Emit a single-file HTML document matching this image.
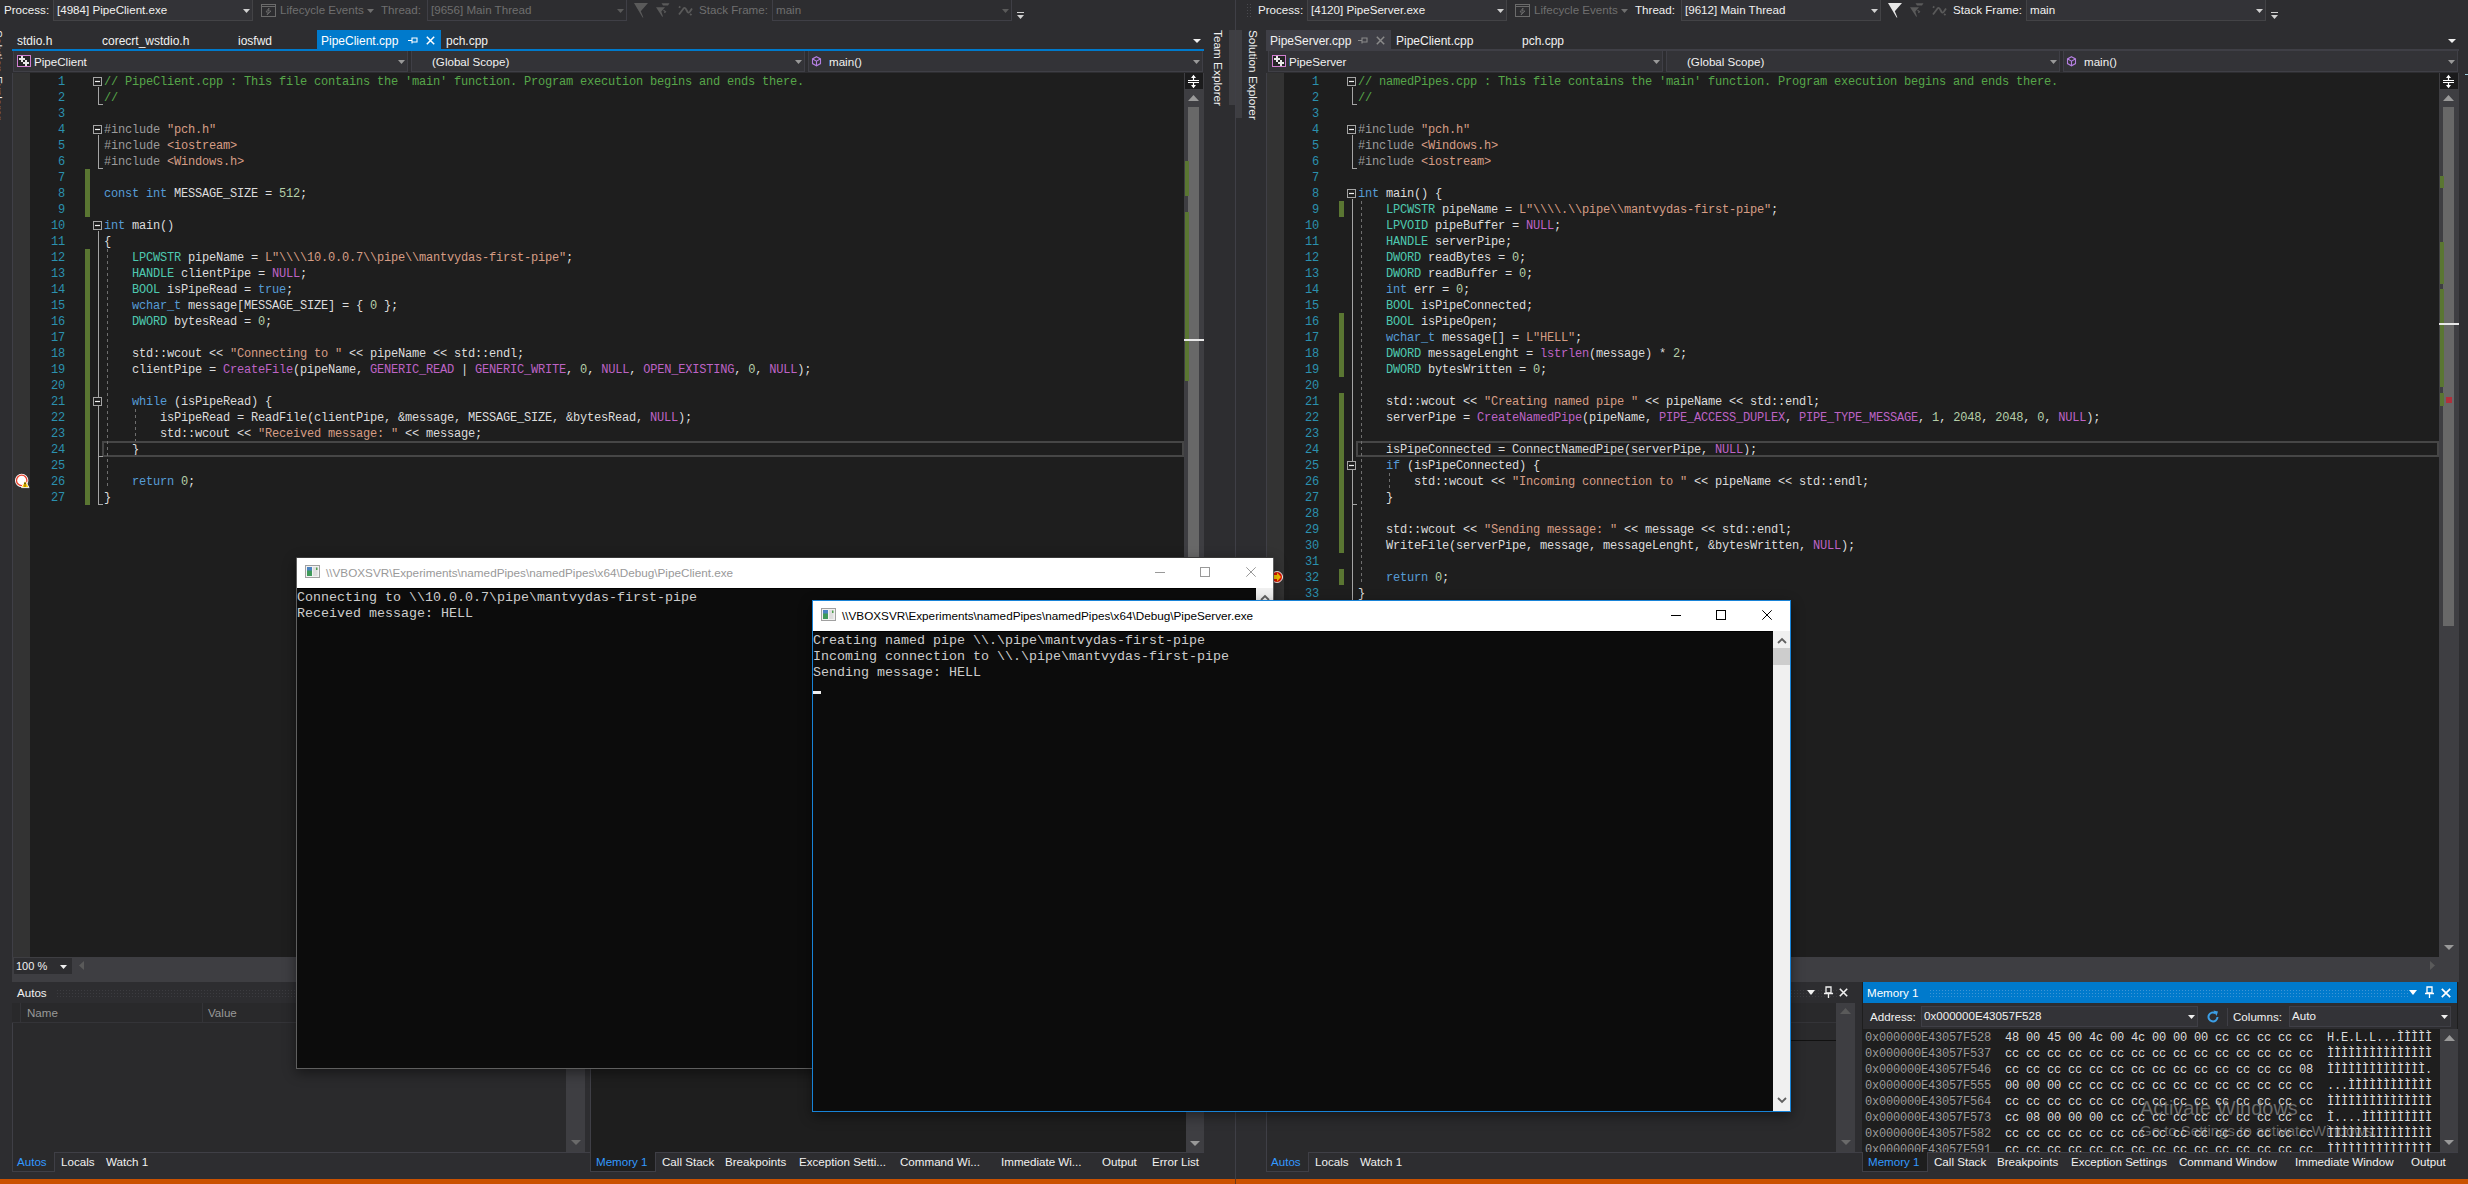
<!DOCTYPE html><html><head><meta charset="utf-8"><title>VS</title><style>
html,body{margin:0;padding:0;}
body{width:2468px;height:1184px;overflow:hidden;position:relative;background:#2d2d30;font-family:"Liberation Sans",sans-serif;}
.a{position:absolute;}
.t{white-space:pre;line-height:16px;font-family:"Liberation Sans",sans-serif;}
.code{font-family:"Liberation Mono",monospace;font-size:12px;letter-spacing:-0.2011px;line-height:16px;white-space:pre;color:#dcdcdc;}
.ln{color:#2b91af;text-align:right;}
.con{font-family:"Liberation Mono",monospace;font-size:13.333px;line-height:16px;white-space:pre;color:#cccccc;}
.vt{writing-mode:vertical-rl;font-size:11.8px;line-height:13px;}
svg{overflow:visible;}
</style></head><body><div class="a" style="left:0;top:0;width:2468px;height:1184px;background:#2d2d30"></div>
<div class="a t" style="left:4px;top:2px;color:#f1f1f1;font-size:11.6px;">Process:</div>
<div class="a" style="left:53px;top:0px;width:200px;height:21px;background:#333337;box-sizing:border-box;border:1px solid #434346;border-top:none;"></div>
<div class="a t" style="left:57px;top:2px;color:#f1f1f1;font-size:11.6px;">[4984] PipeClient.exe</div>
<svg class="a" style="left:243px;top:9px;" width="7" height="4" viewBox="0 0 7 4"><path d="M0 0H7L3.5 4Z" fill="#d0d0d0"/></svg>
<svg class="a" style="left:261px;top:4px;" width="15" height="13" viewBox="0 0 15 13"><rect x="0.5" y="0.5" width="14" height="12" fill="none" stroke="#6b6b6b"/><path d="M0.5 2.5H14.5" stroke="#6b6b6b"/><path d="M8 4L5 8H7.5L6 11L10 7H7.5Z" fill="none" stroke="#6b6b6b" stroke-width="0.9"/></svg>
<div class="a t" style="left:280px;top:2px;color:#6f6f6f;font-size:11.6px;">Lifecycle Events</div>
<svg class="a" style="left:367px;top:9px;" width="7" height="4" viewBox="0 0 7 4"><path d="M0 0H7L3.5 4Z" fill="#6f6f6f"/></svg>
<div class="a t" style="left:381px;top:2px;color:#6f6f6f;font-size:11.6px;">Thread:</div>
<div class="a" style="left:427px;top:0px;width:200px;height:21px;background:#2d2d30;box-sizing:border-box;border:1px solid #3f3f46;border-top:none;"></div>
<div class="a t" style="left:431px;top:2px;color:#6f6f6f;font-size:11.6px;">[9656] Main Thread</div>
<svg class="a" style="left:617px;top:9px;" width="7" height="4" viewBox="0 0 7 4"><path d="M0 0H7L3.5 4Z" fill="#5a5a5a"/></svg>
<svg class="a" style="left:634px;top:3px;" width="15" height="15" viewBox="0 0 15 15"><path d="M0 0H14L6.8 8.2L9.4 14.4L8.6 14.4Z" fill="#5a5a5a"/></svg>
<svg class="a" style="left:656px;top:3px;" width="15" height="15" viewBox="0 0 15 15"><path d="M5.5 0.2H13.5L12 2.4H7Z" fill="#5a5a5a"/><path d="M0 4.2H9L5.3 8.4L7 13.5L6.2 13.8Z" fill="#5a5a5a"/><path d="M7.5 7.2L9.5 8.7L8.3 9.8" fill="none" stroke="#5a5a5a" stroke-width="1.2"/></svg>
<svg class="a" style="left:678px;top:3px;" width="15" height="14" viewBox="0 0 15 14"><path d="M1 11.5L5.5 5.5Q7 4 8.2 6.5L9.5 9Q10.5 10.5 12 8.5L14 5.5M1 3.5L2.3 4.7M12.2 12.2L13.4 10.8" fill="none" stroke="#5a5a5a" stroke-width="1.8"/></svg>
<div class="a t" style="left:699px;top:2px;color:#6f6f6f;font-size:11.6px;">Stack Frame:</div>
<div class="a" style="left:772px;top:0px;width:240px;height:21px;background:#2d2d30;box-sizing:border-box;border:1px solid #3f3f46;border-top:none;"></div>
<div class="a t" style="left:776px;top:2px;color:#6f6f6f;font-size:11.6px;">main</div>
<svg class="a" style="left:1002px;top:9px;" width="7" height="4" viewBox="0 0 7 4"><path d="M0 0H7L3.5 4Z" fill="#5a5a5a"/></svg>
<svg class="a" style="left:1017px;top:12px;" width="8" height="8" viewBox="0 0 8 8"><path d="M0 0.5H7" stroke="#d0d0d0"/><path d="M0 3H7L3.5 7Z" fill="#d0d0d0"/></svg>
<div class="a t" style="left:17px;top:33px;color:#f1f1f1;font-size:12px;">stdio.h</div>
<div class="a t" style="left:102px;top:33px;color:#f1f1f1;font-size:12px;">corecrt_wstdio.h</div>
<div class="a t" style="left:238px;top:33px;color:#f1f1f1;font-size:12px;">iosfwd</div>
<div class="a" style="left:317px;top:30px;width:124px;height:20px;background:#007acc;"></div>
<div class="a t" style="left:321px;top:33px;color:#ffffff;font-size:12px;">PipeClient.cpp</div>
<svg class="a" style="left:408px;top:36px;" width="10" height="9" viewBox="0 0 10 9"><path d="M0 4.5H4M4 1.5V7.5M4 2H9V6H4" fill="none" stroke="#ffffff" stroke-width="1.1"/></svg>
<svg class="a" style="left:426px;top:36px;" width="9" height="9" viewBox="0 0 9 9"><path d="M0.8 0.8L8.2 8.2M8.2 0.8L0.8 8.2" stroke="#ffffff" stroke-width="1.5"/></svg>
<div class="a t" style="left:446px;top:33px;color:#f1f1f1;font-size:12px;">pch.cpp</div>
<div class="a" style="left:12px;top:49px;width:1192px;height:2px;background:#007acc;"></div>
<svg class="a" style="left:1193px;top:39px;" width="8" height="4" viewBox="0 0 8 4"><path d="M0 0H8L4.0 4Z" fill="#f0f0f0"/></svg>
<div class="a" style="left:12px;top:51px;width:1192px;height:22px;background:#2d2d30;"></div>
<div class="a" style="left:13px;top:51px;width:395px;height:21px;background:#333337;box-sizing:border-box;border:1px solid #3f3f46;border-top:none;"></div>
<svg class="a" style="left:398px;top:60px;" width="7" height="4" viewBox="0 0 7 4"><path d="M0 0H7L3.5 4Z" fill="#999999"/></svg>
<svg class="a" style="left:17px;top:55px;" width="15" height="13" viewBox="0 0 15 13"><rect x="0.5" y="0.5" width="13" height="11" fill="#252526" stroke="#d17fd1"/><path d="M2 3h6v2h-6zM4 1h2v6h-2zM6 7h6v2h-6zM8 5h2v6h-2z" fill="#e8e8e8"/></svg>
<div class="a t" style="left:34px;top:54px;color:#f1f1f1;font-size:11.6px;">PipeClient</div>
<div class="a" style="left:411px;top:51px;width:394px;height:21px;background:#333337;box-sizing:border-box;border:1px solid #3f3f46;border-top:none;"></div>
<svg class="a" style="left:795px;top:60px;" width="7" height="4" viewBox="0 0 7 4"><path d="M0 0H7L3.5 4Z" fill="#999999"/></svg>
<div class="a t" style="left:432px;top:54px;color:#f1f1f1;font-size:11.6px;">(Global Scope)</div>
<div class="a" style="left:808px;top:51px;width:395px;height:21px;background:#333337;box-sizing:border-box;border:1px solid #3f3f46;border-top:none;"></div>
<svg class="a" style="left:1193px;top:60px;" width="7" height="4" viewBox="0 0 7 4"><path d="M0 0H7L3.5 4Z" fill="#999999"/></svg>
<svg class="a" style="left:812px;top:56px;" width="10" height="11" viewBox="0 0 10 11"><path d="M4.5 0.7L8.5 2.9V7.6L4.5 9.8L0.5 7.6V2.9Z M0.8 3.1L4.5 5.2L8.2 3.1 M4.5 5.2V9.6" fill="none" stroke="#b47fe0" stroke-width="1.1"/></svg>
<div class="a t" style="left:829px;top:54px;color:#f1f1f1;font-size:11.6px;">main()</div>
<div class="a" style="left:12px;top:73px;width:1192px;height:884px;background:#1e1e1e;"></div>
<div class="a" style="left:12px;top:73px;width:1px;height:884px;background:#3f3f46;"></div>
<div class="a" style="left:13px;top:73px;width:17px;height:884px;background:#333333;"></div>
<div class="a" style="left:1184px;top:73px;width:20px;height:884px;background:#3e3e42;"></div>
<div class="a" style="left:1185px;top:73px;width:18px;height:16px;background:#1b1b1c;"></div>
<svg class="a" style="left:1184px;top:73px;" width="20" height="16" viewBox="0 0 20 16"><rect x="4" y="7" width="11" height="1" fill="#ffffff"/><rect x="4" y="9" width="11" height="1" fill="#ffffff"/><path d="M9.5 3V7M9.5 10V14" stroke="#ffffff" stroke-width="1.2"/><path d="M7 5L9.5 1.8L12 5Z M7 12L9.5 15.2L12 12Z" fill="#ffffff"/></svg>
<svg class="a" style="left:1188px;top:95px;" width="11" height="7" viewBox="0 0 11 7"><path d="M0 6H11L5.5 0Z" fill="#999999"/></svg>
<svg class="a" style="left:1189px;top:945px;" width="10" height="5" viewBox="0 0 10 5"><path d="M0 0H10L5.0 5Z" fill="#999999"/></svg>
<div class="a" style="left:1188px;top:107px;width:11px;height:843px;background:#686868;"></div>
<div class="a" style="left:85px;top:169px;width:5px;height:48px;background:#5a7632;"></div>
<div class="a" style="left:85px;top:249px;width:5px;height:256px;background:#5a7632;"></div>
<div class="a" style="left:1185px;top:161px;width:4px;height:35px;background:#5a7632;"></div>
<div class="a" style="left:1185px;top:212px;width:4px;height:169px;background:#5a7632;"></div>
<div class="a" style="left:1184px;top:339px;width:20px;height:2px;background:#e8e8e8;"></div>
<div class="a code ln" style="left:30px;top:74px;width:35px;">1<br>2<br>3<br>4<br>5<br>6<br>7<br>8<br>9<br>10<br>11<br>12<br>13<br>14<br>15<br>16<br>17<br>18<br>19<br>20<br>21<br>22<br>23<br>24<br>25<br>26<br>27</div>
<div class="a code" style="left:104px;top:74px;"><span style="color:#57a64a">// PipeClient.cpp : This file contains the &#x27;main&#x27; function. Program execution begins and ends there.</span><br><span style="color:#57a64a">//</span><br><br><span style="color:#9b9b9b">#include</span><span style="color:#d69d85"> &quot;pch.h&quot;</span><br><span style="color:#9b9b9b">#include</span><span style="color:#d69d85"> &lt;iostream&gt;</span><br><span style="color:#9b9b9b">#include</span><span style="color:#d69d85"> &lt;Windows.h&gt;</span><br><br><span style="color:#569cd6">const</span> <span style="color:#569cd6">int</span> MESSAGE_SIZE = <span style="color:#b5cea8">512</span>;<br><br><span style="color:#569cd6">int</span> main()<br>{<br>    <span style="color:#4ec9b0">LPCWSTR</span> pipeName = <span style="color:#d69d85">L&quot;\\\\10.0.0.7\\pipe\\mantvydas-first-pipe&quot;</span>;<br>    <span style="color:#4ec9b0">HANDLE</span> clientPipe = <span style="color:#bd63c5">NULL</span>;<br>    <span style="color:#4ec9b0">BOOL</span> isPipeRead = <span style="color:#569cd6">true</span>;<br>    <span style="color:#569cd6">wchar_t</span> message[MESSAGE_SIZE] = { <span style="color:#b5cea8">0</span> };<br>    <span style="color:#4ec9b0">DWORD</span> bytesRead = <span style="color:#b5cea8">0</span>;<br><br>    std::wcout &lt;&lt; <span style="color:#d69d85">&quot;Connecting to &quot;</span> &lt;&lt; pipeName &lt;&lt; std::endl;<br>    clientPipe = <span style="color:#bd63c5">CreateFile</span>(pipeName, <span style="color:#bd63c5">GENERIC_READ</span> | <span style="color:#bd63c5">GENERIC_WRITE</span>, <span style="color:#b5cea8">0</span>, <span style="color:#bd63c5">NULL</span>, <span style="color:#bd63c5">OPEN_EXISTING</span>, <span style="color:#b5cea8">0</span>, <span style="color:#bd63c5">NULL</span>);<br><br>    <span style="color:#569cd6">while</span> (isPipeRead) {<br>        isPipeRead = ReadFile(clientPipe, &amp;message, MESSAGE_SIZE, &amp;bytesRead, <span style="color:#bd63c5">NULL</span>);<br>        std::wcout &lt;&lt; <span style="color:#d69d85">&quot;Received message: &quot;</span> &lt;&lt; message;<br>    }<br><br>    <span style="color:#569cd6">return</span> <span style="color:#b5cea8">0</span>;<br>}</div>
<div class="a" style="left:102px;top:441px;width:1082px;height:16px;box-sizing:border-box;border:2px solid #464646;"></div>
<svg class="a" style="left:93px;top:77px;" width="10" height="10" viewBox="0 0 10 10"><rect x="0.5" y="0.5" width="8" height="8" fill="#1e1e1e" stroke="#a5a5a5"/><path d="M2 4.5H7" stroke="#f0f0f0" stroke-width="1.2"/></svg>
<div class="a" style="left:98px;top:87px;width:1px;height:18px;background:#a5a5a5;"></div>
<div class="a" style="left:98px;top:104px;width:5px;height:1px;background:#a5a5a5;"></div>
<svg class="a" style="left:93px;top:125px;" width="10" height="10" viewBox="0 0 10 10"><rect x="0.5" y="0.5" width="8" height="8" fill="#1e1e1e" stroke="#a5a5a5"/><path d="M2 4.5H7" stroke="#f0f0f0" stroke-width="1.2"/></svg>
<div class="a" style="left:98px;top:135px;width:1px;height:34px;background:#a5a5a5;"></div>
<div class="a" style="left:98px;top:168px;width:5px;height:1px;background:#a5a5a5;"></div>
<svg class="a" style="left:93px;top:221px;" width="10" height="10" viewBox="0 0 10 10"><rect x="0.5" y="0.5" width="8" height="8" fill="#1e1e1e" stroke="#a5a5a5"/><path d="M2 4.5H7" stroke="#f0f0f0" stroke-width="1.2"/></svg>
<div class="a" style="left:98px;top:231px;width:1px;height:274px;background:#a5a5a5;"></div>
<div class="a" style="left:98px;top:504px;width:5px;height:1px;background:#a5a5a5;"></div>
<svg class="a" style="left:93px;top:397px;" width="10" height="10" viewBox="0 0 10 10"><rect x="0.5" y="0.5" width="8" height="8" fill="#1e1e1e" stroke="#a5a5a5"/><path d="M2 4.5H7" stroke="#f0f0f0" stroke-width="1.2"/></svg>
<div class="a" style="left:107px;top:249px;width:1px;height:240px;background-image:linear-gradient(#6e6e6e 50%, transparent 50%);background-size:1px 6px;"></div>
<div class="a" style="left:135px;top:409px;width:1px;height:32px;background-image:linear-gradient(#6e6e6e 50%, transparent 50%);background-size:1px 6px;"></div>
<div class="a" style="left:98px;top:456px;width:5px;height:1px;background:#a5a5a5;"></div>
<svg class="a" style="left:14px;top:472px;" width="17" height="17" viewBox="0 0 17 17"><circle cx="7.7" cy="8.4" r="5.9" fill="#ffffff" stroke="#ffffff" stroke-width="1.6"/><circle cx="7.7" cy="8.4" r="5.2" fill="#ffffff" stroke="#e8412c" stroke-width="1.3"/><path d="M7.5 15.6L11 8.2L15 15.6Z" fill="#ffcc00" stroke="#ffffff" stroke-width="0.9"/><path d="M11 10.5V12.6M11 13.6V14.6" stroke="#000" stroke-width="1.1"/></svg>
<div class="a" style="left:12px;top:957px;width:1192px;height:25px;background:#3e3e42;"></div>
<div class="a" style="left:14px;top:958px;width:58px;height:16px;background:#2d2d30;"></div>
<div class="a t" style="left:16px;top:958px;color:#f1f1f1;font-size:11px;">100 %</div>
<svg class="a" style="left:60px;top:965px;" width="7" height="4" viewBox="0 0 7 4"><path d="M0 0H7L3.5 4Z" fill="#f0f0f0"/></svg>
<svg class="a" style="left:79px;top:961px;" width="5" height="9" viewBox="0 0 5 9"><path d="M5 0V9L0 4.5Z" fill="#5a5a5a"/></svg>
<div class="a" style="left:12px;top:982px;width:573px;height:170px;background:#2a2a2c;box-sizing:border-box;border-left:1px solid #3f3f46;"></div>
<div class="a" style="left:12px;top:982px;width:573px;height:21px;background:#2d2d30;"></div>
<div class="a t" style="left:17px;top:985px;color:#f1f1f1;font-size:11.6px;">Autos</div>
<div class="a" style="left:56px;top:989px;width:513px;height:8px;background-image:radial-gradient(#3c3c40 0.6px, transparent 0.7px);background-size:3px 3px;"></div>
<div class="a" style="left:12px;top:1003px;width:555px;height:20px;background:#29292b;"></div>
<div class="a" style="left:20px;top:1003px;width:1px;height:19px;background:#343438;"></div>
<div class="a" style="left:202px;top:1003px;width:1px;height:19px;background:#343438;"></div>
<div class="a" style="left:12px;top:1022px;width:555px;height:1px;background:#343438;"></div>
<div class="a t" style="left:27px;top:1005px;color:#999999;font-size:11.6px;">Name</div>
<div class="a t" style="left:208px;top:1005px;color:#999999;font-size:11.6px;">Value</div>
<div class="a" style="left:566px;top:1003px;width:19px;height:149px;background:#3e3e42;"></div>
<svg class="a" style="left:570px;top:1008px;" width="11" height="6" viewBox="0 0 11 6"><path d="M0 6H11L5.5 0Z" fill="#5a5a5a"/></svg>
<svg class="a" style="left:571px;top:1140px;" width="10" height="5" viewBox="0 0 10 5"><path d="M0 0H10L5.0 5Z" fill="#6a6a6a"/></svg>
<div class="a" style="left:590px;top:982px;width:614px;height:170px;background:#1e1e1e;box-sizing:border-box;border-left:1px solid #3f3f46;"></div>
<div class="a" style="left:1186px;top:1029px;width:18px;height:123px;background:#3e3e42;"></div>
<svg class="a" style="left:1190px;top:1141px;" width="10" height="5" viewBox="0 0 10 5"><path d="M0 0H10L5.0 5Z" fill="#999999"/></svg>
<div class="a" style="left:12px;top:1152px;width:1192px;height:21px;background:#2d2d30;"></div>
<div class="a" style="left:12px;top:1152px;width:1192px;height:1px;background:#3f3f46;"></div>
<div class="a" style="left:12px;top:1152px;width:43px;height:20px;background:#2a2a2c;box-sizing:border-box;border:1px solid #3f3f46;border-top:none;"></div>
<div class="a t" style="left:17px;top:1154px;color:#3399ff;font-size:11.6px;">Autos</div>
<div class="a t" style="left:61px;top:1154px;color:#f1f1f1;font-size:11.6px;">Locals</div>
<div class="a t" style="left:106px;top:1154px;color:#f1f1f1;font-size:11.6px;">Watch 1</div>
<div class="a" style="left:590px;top:1152px;width:66px;height:20px;background:#1e1e1e;box-sizing:border-box;border:1px solid #3f3f46;border-top:none;"></div>
<div class="a t" style="left:596px;top:1154px;color:#3399ff;font-size:11.6px;">Memory 1</div>
<div class="a t" style="left:662px;top:1154px;color:#f1f1f1;font-size:11.6px;">Call Stack</div>
<div class="a t" style="left:725px;top:1154px;color:#f1f1f1;font-size:11.6px;">Breakpoints</div>
<div class="a t" style="left:799px;top:1154px;color:#f1f1f1;font-size:11.6px;">Exception Setti...</div>
<div class="a t" style="left:900px;top:1154px;color:#f1f1f1;font-size:11.6px;">Command Wi...</div>
<div class="a t" style="left:1001px;top:1154px;color:#f1f1f1;font-size:11.6px;">Immediate Wi...</div>
<div class="a t" style="left:1102px;top:1154px;color:#f1f1f1;font-size:11.6px;">Output</div>
<div class="a t" style="left:1152px;top:1154px;color:#f1f1f1;font-size:11.6px;">Error List</div>
<div class="a t" style="left:1258px;top:2px;color:#f1f1f1;font-size:11.6px;">Process:</div>
<div class="a" style="left:1307px;top:0px;width:200px;height:21px;background:#333337;box-sizing:border-box;border:1px solid #434346;border-top:none;"></div>
<div class="a t" style="left:1311px;top:2px;color:#f1f1f1;font-size:11.6px;">[4120] PipeServer.exe</div>
<svg class="a" style="left:1497px;top:9px;" width="7" height="4" viewBox="0 0 7 4"><path d="M0 0H7L3.5 4Z" fill="#d0d0d0"/></svg>
<svg class="a" style="left:1515px;top:4px;" width="15" height="13" viewBox="0 0 15 13"><rect x="0.5" y="0.5" width="14" height="12" fill="none" stroke="#6b6b6b"/><path d="M0.5 2.5H14.5" stroke="#6b6b6b"/><path d="M8 4L5 8H7.5L6 11L10 7H7.5Z" fill="none" stroke="#6b6b6b" stroke-width="0.9"/></svg>
<div class="a t" style="left:1534px;top:2px;color:#6f6f6f;font-size:11.6px;">Lifecycle Events</div>
<svg class="a" style="left:1621px;top:9px;" width="7" height="4" viewBox="0 0 7 4"><path d="M0 0H7L3.5 4Z" fill="#6f6f6f"/></svg>
<div class="a t" style="left:1635px;top:2px;color:#f1f1f1;font-size:11.6px;">Thread:</div>
<div class="a" style="left:1681px;top:0px;width:200px;height:21px;background:#333337;box-sizing:border-box;border:1px solid #434346;border-top:none;"></div>
<div class="a t" style="left:1685px;top:2px;color:#f1f1f1;font-size:11.6px;">[9612] Main Thread</div>
<svg class="a" style="left:1871px;top:9px;" width="7" height="4" viewBox="0 0 7 4"><path d="M0 0H7L3.5 4Z" fill="#d0d0d0"/></svg>
<svg class="a" style="left:1888px;top:3px;" width="15" height="15" viewBox="0 0 15 15"><path d="M0 0H14L6.8 8.2L9.4 14.4L8.6 14.4Z" fill="#e8e8e8"/></svg>
<svg class="a" style="left:1910px;top:3px;" width="15" height="15" viewBox="0 0 15 15"><path d="M5.5 0.2H13.5L12 2.4H7Z" fill="#5a5a5a"/><path d="M0 4.2H9L5.3 8.4L7 13.5L6.2 13.8Z" fill="#5a5a5a"/><path d="M7.5 7.2L9.5 8.7L8.3 9.8" fill="none" stroke="#5a5a5a" stroke-width="1.2"/></svg>
<svg class="a" style="left:1932px;top:3px;" width="15" height="14" viewBox="0 0 15 14"><path d="M1 11.5L5.5 5.5Q7 4 8.2 6.5L9.5 9Q10.5 10.5 12 8.5L14 5.5M1 3.5L2.3 4.7M12.2 12.2L13.4 10.8" fill="none" stroke="#5a5a5a" stroke-width="1.8"/></svg>
<div class="a t" style="left:1953px;top:2px;color:#f1f1f1;font-size:11.6px;">Stack Frame:</div>
<div class="a" style="left:2026px;top:0px;width:240px;height:21px;background:#333337;box-sizing:border-box;border:1px solid #434346;border-top:none;"></div>
<div class="a t" style="left:2030px;top:2px;color:#f1f1f1;font-size:11.6px;">main</div>
<svg class="a" style="left:2256px;top:9px;" width="7" height="4" viewBox="0 0 7 4"><path d="M0 0H7L3.5 4Z" fill="#d0d0d0"/></svg>
<svg class="a" style="left:2271px;top:12px;" width="8" height="8" viewBox="0 0 8 8"><path d="M0 0.5H7" stroke="#d0d0d0"/><path d="M0 3H7L3.5 7Z" fill="#d0d0d0"/></svg>
<div class="a" style="left:1266px;top:30px;width:125px;height:20px;background:#3f3f46;"></div>
<div class="a t" style="left:1270px;top:33px;color:#f1f1f1;font-size:12px;">PipeServer.cpp</div>
<svg class="a" style="left:1358px;top:36px;" width="10" height="9" viewBox="0 0 10 9"><path d="M0 4.5H4M4 1.5V7.5M4 2H9V6H4" fill="none" stroke="#8a8a8a" stroke-width="1.1"/></svg>
<svg class="a" style="left:1376px;top:36px;" width="9" height="9" viewBox="0 0 9 9"><path d="M0.8 0.8L8.2 8.2M8.2 0.8L0.8 8.2" stroke="#8a8a8a" stroke-width="1.5"/></svg>
<div class="a t" style="left:1396px;top:33px;color:#f1f1f1;font-size:12px;">PipeClient.cpp</div>
<div class="a t" style="left:1522px;top:33px;color:#f1f1f1;font-size:12px;">pch.cpp</div>
<div class="a" style="left:1266px;top:49px;width:1193px;height:3px;background:#3f3f46;"></div>
<svg class="a" style="left:2448px;top:39px;" width="8" height="4" viewBox="0 0 8 4"><path d="M0 0H8L4.0 4Z" fill="#f0f0f0"/></svg>
<div class="a" style="left:1266px;top:51px;width:1193px;height:22px;background:#2d2d30;"></div>
<div class="a" style="left:1268px;top:51px;width:395px;height:21px;background:#333337;box-sizing:border-box;border:1px solid #3f3f46;border-top:none;"></div>
<svg class="a" style="left:1653px;top:60px;" width="7" height="4" viewBox="0 0 7 4"><path d="M0 0H7L3.5 4Z" fill="#999999"/></svg>
<svg class="a" style="left:1272px;top:55px;" width="15" height="13" viewBox="0 0 15 13"><rect x="0.5" y="0.5" width="13" height="11" fill="#252526" stroke="#d17fd1"/><path d="M2 3h6v2h-6zM4 1h2v6h-2zM6 7h6v2h-6zM8 5h2v6h-2z" fill="#e8e8e8"/></svg>
<div class="a t" style="left:1289px;top:54px;color:#f1f1f1;font-size:11.6px;">PipeServer</div>
<div class="a" style="left:1666px;top:51px;width:394px;height:21px;background:#333337;box-sizing:border-box;border:1px solid #3f3f46;border-top:none;"></div>
<svg class="a" style="left:2050px;top:60px;" width="7" height="4" viewBox="0 0 7 4"><path d="M0 0H7L3.5 4Z" fill="#999999"/></svg>
<div class="a t" style="left:1687px;top:54px;color:#f1f1f1;font-size:11.6px;">(Global Scope)</div>
<div class="a" style="left:2063px;top:51px;width:395px;height:21px;background:#333337;box-sizing:border-box;border:1px solid #3f3f46;border-top:none;"></div>
<svg class="a" style="left:2448px;top:60px;" width="7" height="4" viewBox="0 0 7 4"><path d="M0 0H7L3.5 4Z" fill="#999999"/></svg>
<svg class="a" style="left:2067px;top:56px;" width="10" height="11" viewBox="0 0 10 11"><path d="M4.5 0.7L8.5 2.9V7.6L4.5 9.8L0.5 7.6V2.9Z M0.8 3.1L4.5 5.2L8.2 3.1 M4.5 5.2V9.6" fill="none" stroke="#b47fe0" stroke-width="1.1"/></svg>
<div class="a t" style="left:2084px;top:54px;color:#f1f1f1;font-size:11.6px;">main()</div>
<div class="a" style="left:1266px;top:73px;width:1193px;height:884px;background:#1e1e1e;"></div>
<div class="a" style="left:1266px;top:73px;width:1px;height:884px;background:#3f3f46;"></div>
<div class="a" style="left:1267px;top:73px;width:17px;height:884px;background:#333333;"></div>
<div class="a" style="left:2439px;top:73px;width:20px;height:884px;background:#3e3e42;"></div>
<div class="a" style="left:2440px;top:73px;width:18px;height:16px;background:#1b1b1c;"></div>
<svg class="a" style="left:2439px;top:73px;" width="20" height="16" viewBox="0 0 20 16"><rect x="4" y="7" width="11" height="1" fill="#ffffff"/><rect x="4" y="9" width="11" height="1" fill="#ffffff"/><path d="M9.5 3V7M9.5 10V14" stroke="#ffffff" stroke-width="1.2"/><path d="M7 5L9.5 1.8L12 5Z M7 12L9.5 15.2L12 12Z" fill="#ffffff"/></svg>
<svg class="a" style="left:2443px;top:95px;" width="11" height="7" viewBox="0 0 11 7"><path d="M0 6H11L5.5 0Z" fill="#999999"/></svg>
<svg class="a" style="left:2444px;top:945px;" width="10" height="5" viewBox="0 0 10 5"><path d="M0 0H10L5.0 5Z" fill="#999999"/></svg>
<div class="a" style="left:2443px;top:107px;width:11px;height:519px;background:#686868;"></div>
<div class="a" style="left:1339px;top:201px;width:5px;height:16px;background:#5a7632;"></div>
<div class="a" style="left:1339px;top:313px;width:5px;height:64px;background:#5a7632;"></div>
<div class="a" style="left:1339px;top:393px;width:5px;height:160px;background:#5a7632;"></div>
<div class="a" style="left:1339px;top:569px;width:5px;height:16px;background:#5a7632;"></div>
<div class="a" style="left:2440px;top:176px;width:4px;height:12px;background:#5a7632;"></div>
<div class="a" style="left:2440px;top:242px;width:4px;height:42px;background:#5a7632;"></div>
<div class="a" style="left:2440px;top:289px;width:4px;height:98px;background:#5a7632;"></div>
<div class="a" style="left:2440px;top:393px;width:4px;height:13px;background:#5a7632;"></div>
<div class="a" style="left:2439px;top:323px;width:20px;height:2px;background:#e8e8e8;"></div>
<div class="a" style="left:2446px;top:397px;width:6px;height:6px;background:#b0303c;"></div>
<div class="a code ln" style="left:1284px;top:74px;width:35px;">1<br>2<br>3<br>4<br>5<br>6<br>7<br>8<br>9<br>10<br>11<br>12<br>13<br>14<br>15<br>16<br>17<br>18<br>19<br>20<br>21<br>22<br>23<br>24<br>25<br>26<br>27<br>28<br>29<br>30<br>31<br>32<br>33</div>
<div class="a code" style="left:1358px;top:74px;"><span style="color:#57a64a">// namedPipes.cpp : This file contains the &#x27;main&#x27; function. Program execution begins and ends there.</span><br><span style="color:#57a64a">//</span><br><br><span style="color:#9b9b9b">#include</span><span style="color:#d69d85"> &quot;pch.h&quot;</span><br><span style="color:#9b9b9b">#include</span><span style="color:#d69d85"> &lt;Windows.h&gt;</span><br><span style="color:#9b9b9b">#include</span><span style="color:#d69d85"> &lt;iostream&gt;</span><br><br><span style="color:#569cd6">int</span> main() {<br>    <span style="color:#4ec9b0">LPCWSTR</span> pipeName = <span style="color:#d69d85">L&quot;\\\\.\\pipe\\mantvydas-first-pipe&quot;</span>;<br>    <span style="color:#4ec9b0">LPVOID</span> pipeBuffer = <span style="color:#bd63c5">NULL</span>;<br>    <span style="color:#4ec9b0">HANDLE</span> serverPipe;<br>    <span style="color:#4ec9b0">DWORD</span> readBytes = <span style="color:#b5cea8">0</span>;<br>    <span style="color:#4ec9b0">DWORD</span> readBuffer = <span style="color:#b5cea8">0</span>;<br>    <span style="color:#569cd6">int</span> err = <span style="color:#b5cea8">0</span>;<br>    <span style="color:#4ec9b0">BOOL</span> isPipeConnected;<br>    <span style="color:#4ec9b0">BOOL</span> isPipeOpen;<br>    <span style="color:#569cd6">wchar_t</span> message[] = <span style="color:#d69d85">L&quot;HELL&quot;</span>;<br>    <span style="color:#4ec9b0">DWORD</span> messageLenght = <span style="color:#bd63c5">lstrlen</span>(message) * <span style="color:#b5cea8">2</span>;<br>    <span style="color:#4ec9b0">DWORD</span> bytesWritten = <span style="color:#b5cea8">0</span>;<br><br>    std::wcout &lt;&lt; <span style="color:#d69d85">&quot;Creating named pipe &quot;</span> &lt;&lt; pipeName &lt;&lt; std::endl;<br>    serverPipe = <span style="color:#bd63c5">CreateNamedPipe</span>(pipeName, <span style="color:#bd63c5">PIPE_ACCESS_DUPLEX</span>, <span style="color:#bd63c5">PIPE_TYPE_MESSAGE</span>, <span style="color:#b5cea8">1</span>, <span style="color:#b5cea8">2048</span>, <span style="color:#b5cea8">2048</span>, <span style="color:#b5cea8">0</span>, <span style="color:#bd63c5">NULL</span>);<br><br>    isPipeConnected = ConnectNamedPipe(serverPipe, <span style="color:#bd63c5">NULL</span>);<br>    <span style="color:#569cd6">if</span> (isPipeConnected) {<br>        std::wcout &lt;&lt; <span style="color:#d69d85">&quot;Incoming connection to &quot;</span> &lt;&lt; pipeName &lt;&lt; std::endl;<br>    }<br><br>    std::wcout &lt;&lt; <span style="color:#d69d85">&quot;Sending message: &quot;</span> &lt;&lt; message &lt;&lt; std::endl;<br>    WriteFile(serverPipe, message, messageLenght, &amp;bytesWritten, <span style="color:#bd63c5">NULL</span>);<br><br>    <span style="color:#569cd6">return</span> <span style="color:#b5cea8">0</span>;<br>}</div>
<div class="a" style="left:1356px;top:441px;width:1083px;height:16px;box-sizing:border-box;border:2px solid #464646;"></div>
<svg class="a" style="left:1347px;top:77px;" width="10" height="10" viewBox="0 0 10 10"><rect x="0.5" y="0.5" width="8" height="8" fill="#1e1e1e" stroke="#a5a5a5"/><path d="M2 4.5H7" stroke="#f0f0f0" stroke-width="1.2"/></svg>
<div class="a" style="left:1352px;top:87px;width:1px;height:18px;background:#a5a5a5;"></div>
<div class="a" style="left:1352px;top:104px;width:5px;height:1px;background:#a5a5a5;"></div>
<svg class="a" style="left:1347px;top:125px;" width="10" height="10" viewBox="0 0 10 10"><rect x="0.5" y="0.5" width="8" height="8" fill="#1e1e1e" stroke="#a5a5a5"/><path d="M2 4.5H7" stroke="#f0f0f0" stroke-width="1.2"/></svg>
<div class="a" style="left:1352px;top:135px;width:1px;height:34px;background:#a5a5a5;"></div>
<div class="a" style="left:1352px;top:168px;width:5px;height:1px;background:#a5a5a5;"></div>
<svg class="a" style="left:1347px;top:189px;" width="10" height="10" viewBox="0 0 10 10"><rect x="0.5" y="0.5" width="8" height="8" fill="#1e1e1e" stroke="#a5a5a5"/><path d="M2 4.5H7" stroke="#f0f0f0" stroke-width="1.2"/></svg>
<div class="a" style="left:1352px;top:199px;width:1px;height:402px;background:#a5a5a5;"></div>
<div class="a" style="left:1352px;top:600px;width:5px;height:1px;background:#a5a5a5;"></div>
<svg class="a" style="left:1347px;top:461px;" width="10" height="10" viewBox="0 0 10 10"><rect x="0.5" y="0.5" width="8" height="8" fill="#1e1e1e" stroke="#a5a5a5"/><path d="M2 4.5H7" stroke="#f0f0f0" stroke-width="1.2"/></svg>
<div class="a" style="left:1361px;top:201px;width:1px;height:384px;background-image:linear-gradient(#6e6e6e 50%, transparent 50%);background-size:1px 6px;"></div>
<div class="a" style="left:1389px;top:473px;width:1px;height:16px;background-image:linear-gradient(#6e6e6e 50%, transparent 50%);background-size:1px 6px;"></div>
<div class="a" style="left:1352px;top:504px;width:5px;height:1px;background:#a5a5a5;"></div>
<svg class="a" style="left:1270px;top:570px;" width="14" height="14" viewBox="0 0 14 14"><circle cx="7" cy="7" r="5.5" fill="#e51400" stroke="#f5f5f5" stroke-width="1"/><path d="M3.5 5H7V2.5L11 7L7 11.5V9H3.5Z" fill="#ffcc00"/></svg>
<div class="a" style="left:1266px;top:957px;width:1193px;height:25px;background:#3e3e42;"></div>
<div class="a" style="left:1268px;top:958px;width:58px;height:16px;background:#2d2d30;"></div>
<div class="a t" style="left:1270px;top:958px;color:#f1f1f1;font-size:11px;">100 %</div>
<svg class="a" style="left:1314px;top:965px;" width="7" height="4" viewBox="0 0 7 4"><path d="M0 0H7L3.5 4Z" fill="#f0f0f0"/></svg>
<svg class="a" style="left:1333px;top:961px;" width="5" height="9" viewBox="0 0 5 9"><path d="M5 0V9L0 4.5Z" fill="#5a5a5a"/></svg>
<svg class="a" style="left:2430px;top:961px;" width="5" height="9" viewBox="0 0 5 9"><path d="M0 0V9L5 4.5Z" fill="#5a5a5a"/></svg>
<div class="a" style="left:1266px;top:982px;width:589px;height:170px;background:#2a2a2c;box-sizing:border-box;border-left:1px solid #3f3f46;"></div>
<div class="a" style="left:1266px;top:982px;width:589px;height:21px;background:#2d2d30;"></div>
<div class="a t" style="left:1271px;top:985px;color:#f1f1f1;font-size:11.6px;">Autos</div>
<div class="a" style="left:1310px;top:989px;width:529px;height:8px;background-image:radial-gradient(#3c3c40 0.6px, transparent 0.7px);background-size:3px 3px;"></div>
<svg class="a" style="left:1807px;top:990px;" width="8" height="5" viewBox="0 0 8 5"><path d="M0 0H8L4.0 5Z" fill="#f0f0f0"/></svg>
<svg class="a" style="left:1824px;top:986px;" width="9" height="12" viewBox="0 0 9 12"><path d="M2 1H7V7H2Z" fill="none" stroke="#f0f0f0" stroke-width="1.3"/><path d="M0 7.5H9M4.5 7.5V12" stroke="#f0f0f0" stroke-width="1.3"/></svg>
<svg class="a" style="left:1839px;top:988px;" width="9" height="9" viewBox="0 0 9 9"><path d="M0.8 0.8L8.2 8.2M8.2 0.8L0.8 8.2" stroke="#f0f0f0" stroke-width="1.6"/></svg>
<div class="a" style="left:1266px;top:1003px;width:571px;height:20px;background:#29292b;"></div>
<div class="a" style="left:1266px;top:1040px;width:571px;height:1px;background:#111111;"></div>
<div class="a" style="left:1274px;top:1003px;width:1px;height:19px;background:#343438;"></div>
<div class="a" style="left:1456px;top:1003px;width:1px;height:19px;background:#343438;"></div>
<div class="a" style="left:1266px;top:1022px;width:571px;height:1px;background:#343438;"></div>
<div class="a t" style="left:1281px;top:1005px;color:#999999;font-size:11.6px;">Name</div>
<div class="a t" style="left:1462px;top:1005px;color:#999999;font-size:11.6px;">Value</div>
<div class="a" style="left:1836px;top:1003px;width:19px;height:149px;background:#3e3e42;"></div>
<svg class="a" style="left:1840px;top:1008px;" width="11" height="6" viewBox="0 0 11 6"><path d="M0 6H11L5.5 0Z" fill="#5a5a5a"/></svg>
<svg class="a" style="left:1841px;top:1140px;" width="10" height="5" viewBox="0 0 10 5"><path d="M0 0H10L5.0 5Z" fill="#6a6a6a"/></svg>
<div class="a" style="left:1862px;top:982px;width:596px;height:170px;background:#1e1e1e;box-sizing:border-box;border-left:1px solid #3f3f46;"></div>
<div class="a" style="left:1266px;top:1152px;width:1193px;height:21px;background:#2d2d30;"></div>
<div class="a" style="left:1266px;top:1152px;width:1193px;height:1px;background:#3f3f46;"></div>
<div class="a" style="left:1266px;top:1152px;width:43px;height:20px;background:#2a2a2c;box-sizing:border-box;border:1px solid #3f3f46;border-top:none;"></div>
<div class="a t" style="left:1271px;top:1154px;color:#3399ff;font-size:11.6px;">Autos</div>
<div class="a t" style="left:1315px;top:1154px;color:#f1f1f1;font-size:11.6px;">Locals</div>
<div class="a t" style="left:1360px;top:1154px;color:#f1f1f1;font-size:11.6px;">Watch 1</div>
<div class="a" style="left:1235px;top:0px;width:1px;height:1184px;background:#3f3f46;"></div>
<div class="a t vt" style="left:-9px;top:30px;color:#f1f1f1;">Solution Explorer</div>
<div class="a" style="left:0px;top:20px;width:0px;height:0px;"></div>
<div class="a t vt" style="left:1211px;top:30px;color:#f1f1f1;">Team Explorer</div>
<div class="a" style="left:1229px;top:30px;width:6px;height:75px;background:#3e3e42;"></div>
<div class="a" style="left:1236px;top:30px;width:6px;height:88px;background:#3e3e42;"></div>
<div class="a t vt" style="left:1246px;top:30px;color:#f1f1f1;">Solution Explorer</div>
<div class="a" style="left:1246px;top:3px;width:7px;height:16px;background-image:radial-gradient(#4a4a4f 0.6px, transparent 0.7px);background-size:3px 3px;"></div>
<div class="a" style="left:2465px;top:74px;width:3px;height:1px;background:#9fd0e0;"></div>
<div class="a" style="left:0px;top:1179px;width:2468px;height:5px;background:#ca5100;"></div>
<div class="a" style="left:1235px;top:1179px;width:1px;height:5px;background:#6b3a1a;"></div>
<div class="a" style="left:1862px;top:982px;width:595px;height:170px;background:#1e1e1e;"></div>
<div class="a" style="left:1863px;top:982px;width:594px;height:21px;background:#007acc;"></div>
<div class="a t" style="left:1867px;top:985px;color:#ffffff;font-size:11.6px;">Memory 1</div>
<div class="a" style="left:1929px;top:989px;width:480px;height:8px;background-image:radial-gradient(#3d95d6 0.6px, transparent 0.7px);background-size:3px 3px;"></div>
<svg class="a" style="left:2409px;top:990px;" width="8" height="5" viewBox="0 0 8 5"><path d="M0 0H8L4.0 5Z" fill="#ffffff"/></svg>
<svg class="a" style="left:2425px;top:986px;" width="9" height="12" viewBox="0 0 9 12"><path d="M2 1H7V7H2Z" fill="none" stroke="#ffffff" stroke-width="1.3"/><path d="M0 7.5H9M4.5 7.5V12" stroke="#ffffff" stroke-width="1.3"/></svg>
<svg class="a" style="left:2441px;top:988px;" width="10" height="10" viewBox="0 0 10 10"><path d="M0.8 0.8L9.2 9.2M9.2 0.8L0.8 9.2" stroke="#ffffff" stroke-width="1.7"/></svg>
<div class="a" style="left:1863px;top:1003px;width:594px;height:26px;background:#2d2d30;"></div>
<div class="a t" style="left:1870px;top:1009px;color:#f1f1f1;font-size:11.6px;">Address:</div>
<div class="a" style="left:1921px;top:1006px;width:277px;height:21px;background:#333337;box-sizing:border-box;border:1px solid #3f3f46;"></div>
<div class="a t" style="left:1924px;top:1008px;color:#f1f1f1;font-size:11.6px;">0x000000E43057F528</div>
<svg class="a" style="left:2188px;top:1015px;" width="7" height="4" viewBox="0 0 7 4"><path d="M0 0H7L3.5 4Z" fill="#f0f0f0"/></svg>
<svg class="a" style="left:2206px;top:1010px;" width="14" height="14" viewBox="0 0 14 14"><path d="M11.5 7A4.5 4.5 0 1 1 9.5 3.2" fill="none" stroke="#3c9fe6" stroke-width="2"/><path d="M7.5 0.5L12 1.5L10.5 6Z" fill="#3c9fe6"/></svg>
<div class="a" style="left:2227px;top:1008px;width:1px;height:18px;background:#3f3f46;"></div>
<div class="a t" style="left:2233px;top:1009px;color:#f1f1f1;font-size:11.6px;">Columns:</div>
<div class="a" style="left:2289px;top:1006px;width:162px;height:21px;background:#333337;box-sizing:border-box;border:1px solid #3f3f46;"></div>
<div class="a t" style="left:2292px;top:1008px;color:#f1f1f1;font-size:11.6px;">Auto</div>
<svg class="a" style="left:2441px;top:1015px;" width="7" height="4" viewBox="0 0 7 4"><path d="M0 0H7L3.5 4Z" fill="#f0f0f0"/></svg>
<div class="a" style="left:1863px;top:1029px;width:577px;height:123px;overflow:hidden;">
<div class="code" style="position:absolute;left:2px;top:1px;white-space:pre;"><span style="color:#9b9b9b">0x000000E43057F528</span>  48 00 45 00 4c 00 4c 00 00 00 cc cc cc cc cc  H.E.L.L...ÌÌÌÌÌ<br><span style="color:#9b9b9b">0x000000E43057F537</span>  cc cc cc cc cc cc cc cc cc cc cc cc cc cc cc  ÌÌÌÌÌÌÌÌÌÌÌÌÌÌÌ<br><span style="color:#9b9b9b">0x000000E43057F546</span>  cc cc cc cc cc cc cc cc cc cc cc cc cc cc 08  ÌÌÌÌÌÌÌÌÌÌÌÌÌÌ.<br><span style="color:#9b9b9b">0x000000E43057F555</span>  00 00 00 cc cc cc cc cc cc cc cc cc cc cc cc  ...ÌÌÌÌÌÌÌÌÌÌÌÌ<br><span style="color:#9b9b9b">0x000000E43057F564</span>  cc cc cc cc cc cc cc cc cc cc cc cc cc cc cc  ÌÌÌÌÌÌÌÌÌÌÌÌÌÌÌ<br><span style="color:#9b9b9b">0x000000E43057F573</span>  cc 08 00 00 00 cc cc cc cc cc cc cc cc cc cc  Ì....ÌÌÌÌÌÌÌÌÌÌ<br><span style="color:#9b9b9b">0x000000E43057F582</span>  cc cc cc cc cc cc cc cc cc cc cc cc cc cc cc  ÌÌÌÌÌÌÌÌÌÌÌÌÌÌÌ<br><span style="color:#9b9b9b">0x000000E43057F591</span>  cc cc cc cc cc cc cc cc cc cc cc cc cc cc cc  ÌÌÌÌÌÌÌÌÌÌÌÌÌÌÌ</div>
</div>
<div class="a" style="left:2440px;top:1029px;width:18px;height:123px;background:#3e3e42;"></div>
<svg class="a" style="left:2444px;top:1035px;" width="11" height="6" viewBox="0 0 11 6"><path d="M0 6H11L5.5 0Z" fill="#999999"/></svg>
<svg class="a" style="left:2444px;top:1140px;" width="10" height="5" viewBox="0 0 10 5"><path d="M0 0H10L5.0 5Z" fill="#999999"/></svg>
<div class="a t" style="left:2140px;top:1100px;font-size:20px;color:rgba(200,200,200,0.45);">Activate Windows</div>
<div class="a t" style="left:2140px;top:1123px;font-size:15px;color:rgba(200,200,200,0.45);">Go to Settings to activate Windows.</div>
<div class="a" style="left:1862px;top:1152px;width:66px;height:20px;background:#1e1e1e;box-sizing:border-box;border:1px solid #3f3f46;border-top:none;"></div>
<div class="a t" style="left:1868px;top:1154px;color:#3399ff;font-size:11.6px;">Memory 1</div>
<div class="a t" style="left:1934px;top:1154px;color:#f1f1f1;font-size:11.6px;">Call Stack</div>
<div class="a t" style="left:1997px;top:1154px;color:#f1f1f1;font-size:11.6px;">Breakpoints</div>
<div class="a t" style="left:2071px;top:1154px;color:#f1f1f1;font-size:11.6px;">Exception Settings</div>
<div class="a t" style="left:2179px;top:1154px;color:#f1f1f1;font-size:11.6px;">Command Window</div>
<div class="a t" style="left:2295px;top:1154px;color:#f1f1f1;font-size:11.6px;">Immediate Window</div>
<div class="a t" style="left:2411px;top:1154px;color:#f1f1f1;font-size:11.6px;">Output</div>
<div class="a" style="left:2458px;top:982px;width:10px;height:197px;background:#2d2d30;"></div>
<div class="a" style="left:296px;top:557px;width:978px;height:512px;background:#ffffff;box-sizing:border-box;border:1px solid #5f5f5f;box-shadow:0 4px 12px rgba(0,0,0,0.45);"></div>
<div class="a" style="left:296px;top:557px;width:978px;height:1px;background:#3a3a3a;"></div>
<svg class="a" style="left:305px;top:565px;" width="15" height="13" viewBox="0 0 15 13"><rect x="0.5" y="0.5" width="14" height="12" fill="#f2f2f2" stroke="#a0a0a0"/><rect x="2" y="2" width="5" height="9" fill="#3f9a5a"/><rect x="2" y="2" width="5" height="3.5" fill="#4a82c0"/><rect x="8" y="2" width="4.5" height="9" fill="#dedede"/><rect x="11" y="2.5" width="1.5" height="2.5" fill="#4fa04f"/></svg>
<div class="a t" style="left:326px;top:565px;color:#999999;font-size:11.72px;">\\VBOXSVR\Experiments\namedPipes\namedPipes\x64\Debug\PipeClient.exe</div>
<svg class="a" style="left:1155px;top:567px;" width="12" height="12" viewBox="0 0 12 12"><path d="M0 5.5H10" stroke="#999999" stroke-width="1"/></svg>
<svg class="a" style="left:1200px;top:567px;" width="12" height="12" viewBox="0 0 12 12"><rect x="0.5" y="0.5" width="9" height="9" fill="none" stroke="#999999" stroke-width="1"/></svg>
<svg class="a" style="left:1246px;top:567px;" width="12" height="12" viewBox="0 0 12 12"><path d="M0.3 0.3L9.7 9.7M9.7 0.3L0.3 9.7" stroke="#999999" stroke-width="1"/></svg>
<div class="a" style="left:297px;top:588px;width:960px;height:480px;background:#0c0c0c;"></div>
<div class="a" style="left:297px;top:588px;width:960px;height:1px;background:#000000;"></div>
<div class="a" style="left:1256px;top:588px;width:17px;height:480px;background:#f0f0f0;"></div>
<svg class="a" style="left:1260px;top:594px;" width="10" height="7" viewBox="0 0 10 7"><path d="M1 6L5 2L9 6" fill="none" stroke="#606060" stroke-width="1.8"/></svg>
<svg class="a" style="left:1260px;top:1054px;" width="10" height="7" viewBox="0 0 10 7"><path d="M1 1L5 5L9 1" fill="none" stroke="#606060" stroke-width="1.8"/></svg>
<div class="a" style="left:1256px;top:605px;width:17px;height:17px;background:#cdcdcd;"></div>
<div class="a con" style="left:297px;top:590px;">Connecting to \\10.0.0.7\pipe\mantvydas-first-pipe<br>Received message: HELL</div>
<div class="a" style="left:812px;top:600px;width:979px;height:512px;background:#ffffff;box-sizing:border-box;border:1px solid #1883d7;box-shadow:0 4px 12px rgba(0,0,0,0.45);"></div>
<svg class="a" style="left:821px;top:608px;" width="15" height="13" viewBox="0 0 15 13"><rect x="0.5" y="0.5" width="14" height="12" fill="#f2f2f2" stroke="#a0a0a0"/><rect x="2" y="2" width="5" height="9" fill="#3f9a5a"/><rect x="2" y="2" width="5" height="3.5" fill="#4a82c0"/><rect x="8" y="2" width="4.5" height="9" fill="#dedede"/><rect x="11" y="2.5" width="1.5" height="2.5" fill="#4fa04f"/></svg>
<div class="a t" style="left:842px;top:608px;color:#000000;font-size:11.72px;">\\VBOXSVR\Experiments\namedPipes\namedPipes\x64\Debug\PipeServer.exe</div>
<svg class="a" style="left:1671px;top:610px;" width="12" height="12" viewBox="0 0 12 12"><path d="M0 5.5H10" stroke="#000000" stroke-width="1"/></svg>
<svg class="a" style="left:1716px;top:610px;" width="12" height="12" viewBox="0 0 12 12"><rect x="0.5" y="0.5" width="9" height="9" fill="none" stroke="#000000" stroke-width="1"/></svg>
<svg class="a" style="left:1762px;top:610px;" width="12" height="12" viewBox="0 0 12 12"><path d="M0.3 0.3L9.7 9.7M9.7 0.3L0.3 9.7" stroke="#000000" stroke-width="1"/></svg>
<div class="a" style="left:813px;top:631px;width:961px;height:480px;background:#0c0c0c;"></div>
<div class="a" style="left:813px;top:631px;width:961px;height:1px;background:#000000;"></div>
<div class="a" style="left:1773px;top:631px;width:17px;height:480px;background:#f0f0f0;"></div>
<svg class="a" style="left:1777px;top:637px;" width="10" height="7" viewBox="0 0 10 7"><path d="M1 6L5 2L9 6" fill="none" stroke="#606060" stroke-width="1.8"/></svg>
<svg class="a" style="left:1777px;top:1097px;" width="10" height="7" viewBox="0 0 10 7"><path d="M1 1L5 5L9 1" fill="none" stroke="#606060" stroke-width="1.8"/></svg>
<div class="a" style="left:1773px;top:648px;width:17px;height:17px;background:#cdcdcd;"></div>
<div class="a con" style="left:813px;top:633px;">Creating named pipe \\.\pipe\mantvydas-first-pipe<br>Incoming connection to \\.\pipe\mantvydas-first-pipe<br>Sending message: HELL</div>
<div class="a" style="left:813px;top:691px;width:8px;height:3px;background:#f0f0f0;"></div></body></html>
